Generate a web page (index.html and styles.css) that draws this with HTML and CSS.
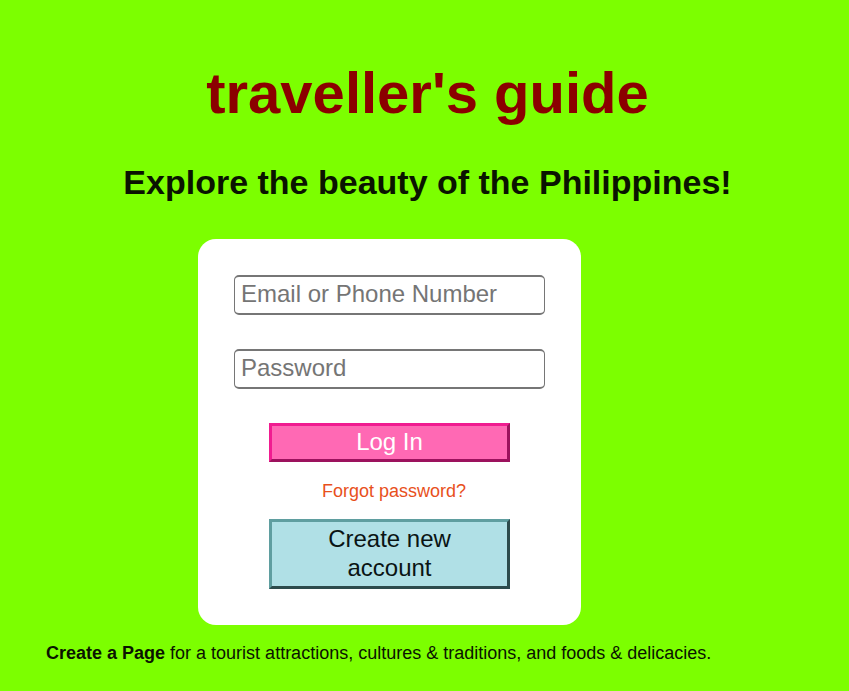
FILE: index.html
```html
<!DOCTYPE html>
<html lang="en">
<head>
<meta charset="utf-8">
<title>traveller's guide</title>
<link rel="stylesheet" href="styles.css">
</head>
<body>
<header class="intro">
<h1 class="brand">traveller's guide</h1>
<h2 class="tagline">Explore the beauty of the Philippines!</h2>
</header>
<main class="content">
<form class="card">
<input class="field" type="text" placeholder="Email or Phone Number" aria-label="Email or Phone Number">
<input class="field" type="password" placeholder="Password" aria-label="Password">
<button class="button login" type="button">Log In</button>
<a class="forgot" href="#">Forgot password?</a>
<button class="button create" type="button">Create new account</button>
</form>
<p class="note"><b>Create a Page</b> for a tourist attractions, cultures &amp; traditions, and foods &amp; delicacies.</p>
</main>
</body>
</html>
```
FILE: styles.css
```css
* {
  box-sizing: border-box;
}

body {
  margin: 0;
  padding: 60px 0 24px;
  background: #7cff00;
  color: #0a1400;
  font-family: "Liberation Sans", Arial, sans-serif;
}

.intro {
  padding-left: 6px;
  text-align: center;
}

.brand {
  margin: 0;
  color: #8b0000;
  font-size: 58px;
  line-height: 66px;
}

.tagline {
  margin: 36px 0 37px;
  font-size: 34px;
  line-height: 40px;
}

.content {
  padding: 0 46px;
}

.card {
  display: flex;
  flex-direction: column;
  align-items: center;
  max-width: 383px;
  margin: 0 0 0 152px;
  padding: 36px;
  border-radius: 18px;
  background: #fff;
}

.field {
  width: 100%;
  height: 40px;
  margin: 0 0 34px;
  padding: 0 6px 2px;
  border: solid #767676;
  border-width: 2px 1px;
  border-radius: 5px;
  font: 24px "Liberation Sans", Arial, sans-serif;
}

.field::placeholder {
  color: #757575;
}

.button {
  width: 241px;
  padding: 2px 36px 4px;
  border: 3px outset;
  font: 24px/29px "Liberation Sans", Arial, sans-serif;
}

.login {
  height: 39px;
  padding: 0 36px 2px;
  border-color: #f01c90;
  background: #ff69b4;
  color: #fff;
}

.forgot {
  margin: 18px 0 17px 9px;
  color: #e8501c;
  font-size: 18px;
  line-height: 22px;
  text-decoration: none;
}

.create {
  height: 70px;
  border-color: #5f9ea0;
  background: #b0e0e6;
  color: #0a1414;
}

.note {
  margin: 17px 0 0;
  font-size: 18px;
  line-height: 22px;
}
```
